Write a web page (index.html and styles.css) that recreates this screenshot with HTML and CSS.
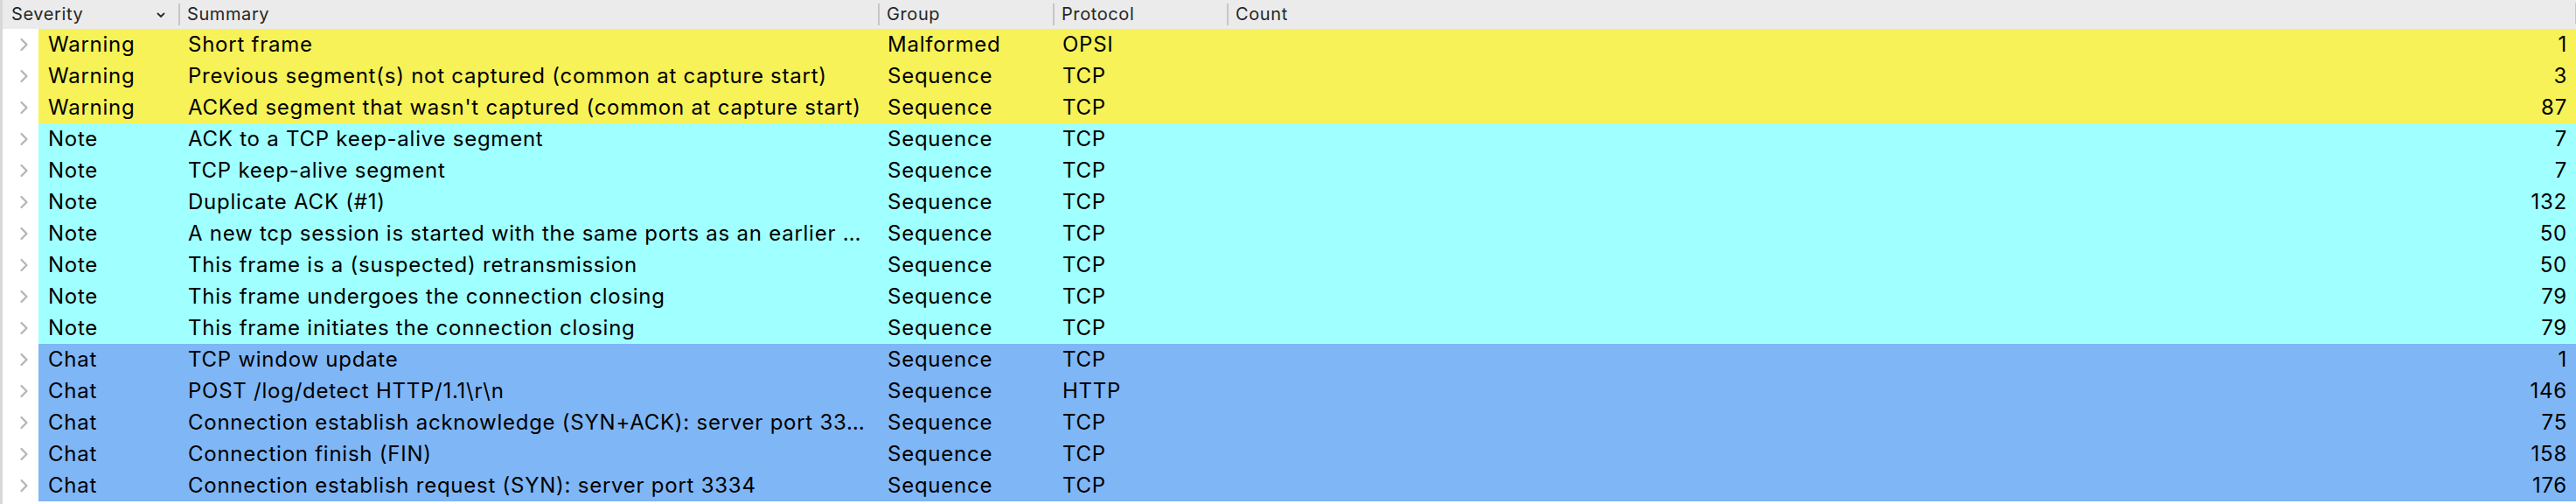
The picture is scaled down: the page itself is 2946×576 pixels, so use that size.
FILE: index.html
```html
<!DOCTYPE html>
<html>
<head>
<meta charset="utf-8">
<link rel="stylesheet" href="styles.css">
</head>
<body>
<div class="table">
  <div class="header">
    <div class="hcell first"><span class="htext">Severity</span><svg class="sortchev" width="10" height="7" viewBox="0 0 10 7"><path d="M1.5 1.5 L5 5 L8.5 1.5" fill="none" stroke="#2a2a2a" stroke-width="1.8" stroke-linecap="round" stroke-linejoin="round"/></svg></div>
    <div class="hcell"><span class="sep"></span><span class="htext">Summary</span></div>
    <div class="hcell"><span class="sep"></span><span class="htext">Group</span></div>
    <div class="hcell"><span class="sep"></span><span class="htext">Protocol</span></div>
    <div class="hcell"><span class="sep"></span><span class="htext">Count</span></div>
    <span class="scrollthumb"></span>
  </div>
  <div class="body" id="body"></div>
</div>
<script src="app.js"></script>
</body>
</html>
```

FILE: app.js
```js
const rows = [
  ["warn","Warning","Short frame","Malformed","OPSI","1"],
  ["warn","Warning","Previous segment(s) not captured (common at capture start)","Sequence","TCP","3"],
  ["warn","Warning","ACKed segment that wasn't captured (common at capture start)","Sequence","TCP","87"],
  ["note","Note","ACK to a TCP keep-alive segment","Sequence","TCP","7"],
  ["note","Note","TCP keep-alive segment","Sequence","TCP","7"],
  ["note","Note","Duplicate ACK (#1)","Sequence","TCP","132"],
  ["note","Note","A new tcp session is started with the same ports as an earlier \u2026","Sequence","TCP","50"],
  ["note","Note","This frame is a (suspected) retransmission","Sequence","TCP","50"],
  ["note","Note","This frame undergoes the connection closing","Sequence","TCP","79"],
  ["note","Note","This frame initiates the connection closing","Sequence","TCP","79"],
  ["chat","Chat","TCP window update","Sequence","TCP","1"],
  ["chat","Chat","POST /log/detect HTTP/1.1\\r\\n","Sequence","HTTP","146"],
  ["chat","Chat","Connection establish acknowledge (SYN+ACK): server port 33\u2026","Sequence","TCP","75"],
  ["chat","Chat","Connection finish (FIN)","Sequence","TCP","158"],
  ["chat","Chat","Connection establish request (SYN): server port 3334","Sequence","TCP","176"]
];
const body = document.getElementById("body");
const chev = '<svg class="chev" width="11" height="16" viewBox="0 0 11 16"><path d="M2.5 2 L8.5 8 L2.5 14" fill="none" stroke="#b4b4b4" stroke-width="2.2" stroke-linecap="round" stroke-linejoin="round"/></svg>';
const esc = s => s.replace(/&/g,"&amp;").replace(/</g,"&lt;");
for (const r of rows) {
  const row = document.createElement("div");
  row.className = "row";
  row.innerHTML =
    '<div class="disc">' + chev + '</div>' +
    '<div class="cells ' + r[0] + '">' +
      '<div class="cell sev">' + esc(r[1]) + '</div>' +
      '<div class="cell sum">' + esc(r[2]) + '</div>' +
      '<div class="cell grp">' + esc(r[3]) + '</div>' +
      '<div class="cell pro">' + esc(r[4]) + '</div>' +
      '<div class="cell cnt">' + esc(r[5]) + '</div>' +
    '</div>';
  body.appendChild(row);
}
```

FILE: styles.css
```css
html, body {
  margin: 0;
  padding: 0;
  background: #ffffff;
}
body {
  width: 2946px;
  height: 576px;
  overflow: hidden;
  font-family: Inter, "Liberation Sans", sans-serif;
  color: #000;
}
.table {
  border-left: 3px solid #d8d8d8;
  width: 2943px;
  height: 576px;
  display: flex;
  flex-direction: column;
}
.header {
  position: relative;
  height: 33px;
  background: #ebebeb;
  display: grid;
  grid-template-columns: 201px 800px 200px 199px 1fr;
  align-items: center;
  color: #262626;
  font-size: 20px;
  letter-spacing: 0.6px;
}
.hcell {
  display: flex;
  align-items: center;
  height: 33px;
}
.hcell.first {
  padding-left: 10px;
  justify-content: space-between;
  padding-right: 15px;
}
.sep {
  width: 2px;
  height: 25px;
  background: #c6c6c6;
  margin-right: 8px;
}
.htext {
  line-height: 33px;
}
.sortchev {
  margin-top: 2px;
}
.scrollthumb {
  position: absolute;
  right: -2px;
  top: 3px;
  width: 3px;
  height: 25px;
  border-radius: 2px;
  background: #c4c4c4;
}
.body {
  display: flex;
  flex-direction: column;
}
.row {
  display: grid;
  grid-template-columns: 41px 1fr;
  height: 36px;
}
.disc {
  display: flex;
  align-items: center;
  padding-left: 19px;
}
.cells {
  display: grid;
  grid-template-columns: 160px 800px 200px 199px 1fr;
  align-items: center;
  font-size: 24px;
  letter-spacing: 0.75px;
  height: 36px;
}
.warn { background: #f6f257; }
.note { background: #a0ffff; }
.chat { background: #7fb6f6; }
.cell {
  padding-left: 11px;
  white-space: nowrap;
  overflow: hidden;
  line-height: 36px;
}
.cnt {
  text-align: right;
  padding-right: 10px;
}
```
